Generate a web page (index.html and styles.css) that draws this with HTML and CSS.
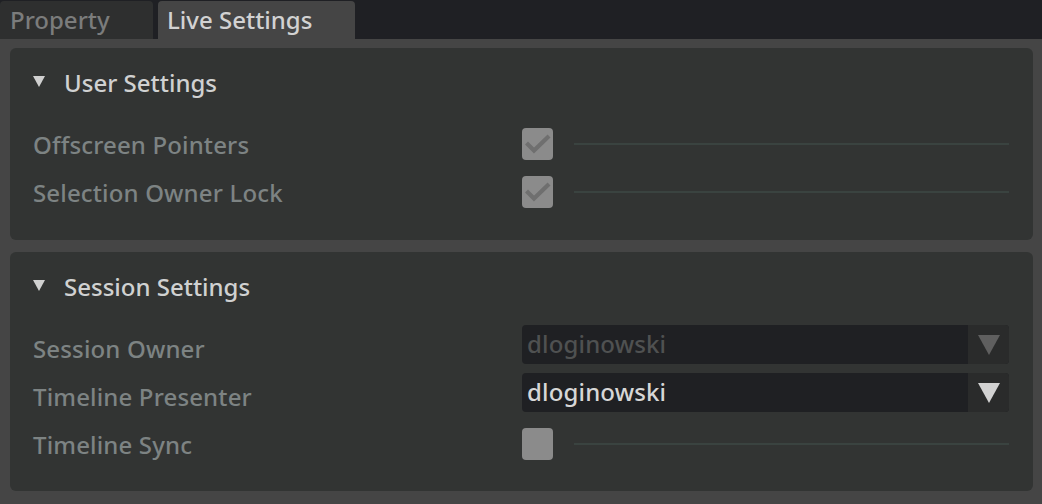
FILE: index.html
```html
<!DOCTYPE html>
<html>
<head>
<meta charset="utf-8">
<link rel="stylesheet" href="styles.css">
</head>
<body>
<div class="window">
  <div class="tabbar">
    <div class="tab tab-inactive">Property</div>
    <div class="tab tab-active">Live Settings</div>
  </div>
  <div class="content">
    <section class="frame">
      <div class="frame-header">
        <span class="caret"></span>
        <span class="frame-title">User Settings</span>
      </div>
      <div class="row">
        <div class="label">Offscreen Pointers</div>
        <div class="control">
          <span class="checkbox">
            <svg viewBox="0 0 32 32" width="32" height="32"><polyline points="6,16.5 12,22.5 25.5,9.5" fill="none" stroke="#6f6f6f" stroke-width="4.2" stroke-linecap="square"/></svg>
          </span>
          <span class="rule"></span>
        </div>
      </div>
      <div class="row">
        <div class="label">Selection Owner Lock</div>
        <div class="control">
          <span class="checkbox">
            <svg viewBox="0 0 32 32" width="32" height="32"><polyline points="6,16.5 12,22.5 25.5,9.5" fill="none" stroke="#6f6f6f" stroke-width="4.2" stroke-linecap="square"/></svg>
          </span>
          <span class="rule"></span>
        </div>
      </div>
    </section>
    <section class="frame">
      <div class="frame-header">
        <span class="caret"></span>
        <span class="frame-title">Session Settings</span>
      </div>
      <div class="row">
        <div class="label">Session Owner</div>
        <div class="control">
          <div class="combo combo-disabled">
            <span class="combo-text">dloginowski</span>
            <span class="combo-arrow"><span class="arrow"></span></span>
          </div>
        </div>
      </div>
      <div class="row">
        <div class="label">Timeline Presenter</div>
        <div class="control">
          <div class="combo">
            <span class="combo-text">dloginowski</span>
            <span class="combo-arrow"><span class="arrow"></span></span>
          </div>
        </div>
      </div>
      <div class="row">
        <div class="label">Timeline Sync</div>
        <div class="control">
          <span class="checkbox"></span>
          <span class="rule"></span>
        </div>
      </div>
    </section>
  </div>
</div>
</body>
</html>
```

FILE: styles.css
```css
* { box-sizing: border-box; }
html, body {
  margin: 0;
  padding: 0;
  width: 1042px;
  height: 504px;
  overflow: hidden;
  background: #454545;
  font-family: "Noto Sans", "Open Sans", sans-serif;
  font-weight: 500;
  letter-spacing: 0.15px;
}
.window {
  display: flex;
  flex-direction: column;
  width: 1042px;
  height: 504px;
}
.tabbar {
  display: flex;
  gap: 5px;
  height: 39px;
  padding-top: 1px;
  background: #1f2024;
}
.tab {
  display: flex;
  align-items: center;
  height: 38px;
  font-size: 24px;
  letter-spacing: 0;
  border-radius: 4px 4px 0 0;
  line-height: 1;
  padding-bottom: 1px;
}
.tab-inactive {
  width: 153px;
  padding-left: 10px;
  background: #2e2f2f;
  color: #7b7c7c;
}
.tab-active {
  width: 197px;
  padding-left: 9px;
  background: #454545;
  color: #d2d2d2;
}
.content {
  flex: 1;
  display: flex;
  flex-direction: column;
  gap: 12px;
  padding: 9px 9px 13px 10px;
  background: #454545;
}
.frame {
  background: #323433;
  border-radius: 6px;
  padding: 14px 24px 22px 23px;
}
.frame + .frame { padding-bottom: 21px; }
.frame-header {
  display: flex;
  align-items: center;
  height: 42px;
  margin-bottom: 18px;
}
.caret {
  width: 0;
  height: 0;
  border-left: 6px solid transparent;
  border-right: 6px solid transparent;
  border-top: 11px solid #d0d0d0;
  margin-left: 0;
  margin-right: 19px;
  margin-top: -3px;
}
.frame-title {
  font-size: 24px;
  letter-spacing: 0;
  color: #d0d1d1;
  line-height: 42px;
}
.row {
  display: flex;
  align-items: center;
  height: 48px;
}
.label {
  width: 489px;
  flex: none;
  font-size: 24px;
  color: #7d8383;
  line-height: 32px;
  margin-top: -2px;
}
.control {
  flex: 1;
  display: flex;
  align-items: center;
  height: 48px;
}
.checkbox {
  width: 31px;
  height: 32px;
  flex: none;
  background: #8b8b8b;
  border-radius: 4px;
  margin-top: -4px;
  display: block;
  overflow: hidden;
}
.checkbox svg { display: block; }
.rule {
  flex: 1;
  height: 2px;
  margin-left: 21px;
  margin-top: -4px;
  background: #3a4340;
}
.combo {
  flex: 1;
  display: flex;
  height: 39px;
  margin-top: -11px;
  border-radius: 4px;
  background: #1f2023;
  overflow: hidden;
}
.combo-text {
  flex: 1;
  padding-left: 5px;
  font-size: 24px;
  line-height: 38px;
  color: #d7d7d7;
}
.combo-disabled .combo-text { color: #4f5151; }
.combo-arrow {
  width: 41px;
  flex: none;
  background: #2a2b2b;
  display: flex;
  align-items: center;
  justify-content: center;
}
.arrow {
  width: 0;
  height: 0;
  border-left: 11.5px solid transparent;
  border-right: 11.5px solid transparent;
  border-top: 20px solid #d2d2d2;
}
.combo-disabled .arrow { border-top-color: #5f5f5f; }
```
